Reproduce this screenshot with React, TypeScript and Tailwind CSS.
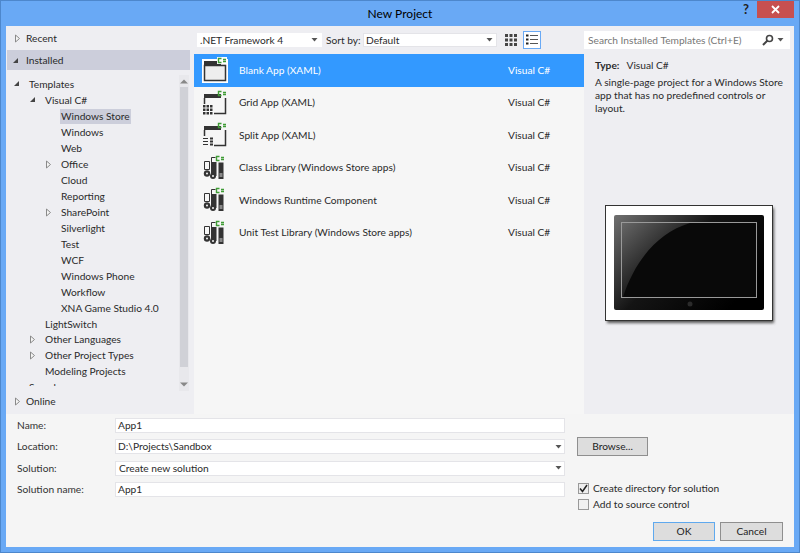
import React from 'react'

const tree = [
    { label: 'Templates', indent: 29, arrow: 'open' },
    { label: 'Visual C#', indent: 45, arrow: 'open' },
    { label: 'Windows Store', indent: 61, selected: true },
    { label: 'Windows', indent: 61 },
    { label: 'Web', indent: 61 },
    { label: 'Office', indent: 61, arrow: 'closed' },
    { label: 'Cloud', indent: 61 },
    { label: 'Reporting', indent: 61 },
    { label: 'SharePoint', indent: 61, arrow: 'closed' },
    { label: 'Silverlight', indent: 61 },
    { label: 'Test', indent: 61 },
    { label: 'WCF', indent: 61 },
    { label: 'Windows Phone', indent: 61 },
    { label: 'Workflow', indent: 61 },
    { label: 'XNA Game Studio 4.0', indent: 61 },
    { label: 'LightSwitch', indent: 45 },
    { label: 'Other Languages', indent: 45, arrow: 'closed' },
    { label: 'Other Project Types', indent: 45, arrow: 'closed' },
    { label: 'Modeling Projects', indent: 45 },
    { label: 'Samples', indent: 29 },
]

const templates = [
    { name: 'Blank App (XAML)', icon: 'blank' },
    { name: 'Grid App (XAML)', icon: 'grid' },
    { name: 'Split App (XAML)', icon: 'split' },
    { name: 'Class Library (Windows Store apps)', icon: 'lib' },
    { name: 'Windows Runtime Component', icon: 'lib' },
    { name: 'Unit Test Library (Windows Store apps)', icon: 'lib' },
]

function Arrow({ open }: { open?: boolean }) {
    return open ? (
        <svg width="7" height="7" viewBox="0 0 7 7" className="shrink-0">
            <path d="M6 1V6H1Z" fill="#444" />
        </svg>
    ) : (
        <svg width="7" height="9" viewBox="0 0 7 9" className="shrink-0">
            <path d="M1.500 1V8L5.500 4.500Z" fill="#f4f4f4" stroke="#8a8a8a" />
        </svg>
    )
}

function Caret() {
    return (
        <svg width="7" height="4" viewBox="0 0 7 4" className="shrink-0">
            <path d="M0.500 0H6.500L3.500 3.500Z" fill="#555" />
        </svg>
    )
}

// small green "C#" mark in the top right of each template icon
function CSharp({ x = 14, backed }: { x?: number; backed?: boolean }) {
    return (
        <g>
            {backed && <rect x={x + 1} y="0" width="10" height="7" fill="#fff" />}
            <g fill="none" stroke="#3f9c35" strokeWidth="1.400">
                <path d={`M${x + 5.500} 1.500H${x + 2.500}V5.500H${x + 5.500}`} />
                <path d={`M${x + 7} 2.500H${x + 10}M${x + 7} 4.500H${x + 10}`} strokeWidth="1.500" />
            </g>
        </g>
    )
}

function TemplateIcon({ kind, selected }: { kind: string; selected?: boolean }) {
    if (kind === 'lib') {
        return (
            <svg width="26" height="26" viewBox="0 0 26 26">
                <path d="M9.500 7V2.500H13.500" fill="none" stroke="#333" />
                <path d="M2.500 6.500H7.500V14.500H2.500Z" fill="#f6f6f6" stroke="#333" />
                <path d="M9 7H14.500V21H9Z" fill="#333" />
                <path d="M16.500 7.500H21.500V24H16.500Z" fill="#333" />
                <path d="M17.500 19H20.500M17.500 21H20.500" stroke="#ddd" />
                <circle cx="5" cy="18.500" r="3.200" fill="#333" />
                <circle cx="5" cy="18.500" r="1" fill="#f6f6f6" />
                <circle cx="11" cy="21" r="3" fill="#333" />
                <circle cx="11" cy="21" r="1" fill="#f6f6f6" />
                <CSharp x={12} />
            </svg>
        )
    }
    return (
        <svg width="26" height="26" viewBox="0 0 26 26">
            {selected && <rect x="1" y="3" width="24" height="22" fill="#eee" stroke="#fff" strokeWidth="2" />}
            <path d="M2 4H19V8H2Z" fill="#333" />
            {kind === 'blank' ? (
                <path d="M2.500 8.500H23.500V23.500H2.500Z" fill="none" stroke="#333" strokeWidth="1.500" />
            ) : (
                <path d="M2.500 8V14M23.500 8V23.500H12" fill="none" stroke="#333" strokeWidth="1.500" />
            )}
            {kind === 'grid' && (
                <g fill="#333">
                    {[0, 1, 2].map((r) =>
                        [0, 1, 2].map((c) => <rect key={`${r}${c}`} x={1 + c * 3.500} y={15 + r * 3.500} width="2.500" height="2.500" />),
                    )}
                </g>
            )}
            {kind === 'split' && (
                <g stroke="#333" strokeWidth="1.200">
                    <path d="M1 16.500H6M1 19.500H6M1 22.500H6" />
                    <path d="M8 16.500H11M8 19.500H11M8 22.500H11" strokeWidth="1.800" />
                </g>
            )}
            <CSharp x={14} backed={selected} />
        </svg>
    )
}

function TabletPreview() {
    return (
        <svg width="176" height="124" viewBox="0 0 176 124">
            <defs>
                <linearGradient id="body" x1="0" y1="0" x2="1" y2="0.600">
                    <stop offset="0" stopColor="#707070" />
                    <stop offset="0.500" stopColor="#141414" />
                    <stop offset="1" stopColor="#000" />
                </linearGradient>
                <linearGradient id="shine" gradientUnits="userSpaceOnUse" x1="17" y1="18" x2="58" y2="62">
                    <stop offset="0" stopColor="#666" />
                    <stop offset="1" stopColor="#161616" />
                </linearGradient>
                <filter id="blur">
                    <feGaussianBlur stdDeviation="1.500" />
                </filter>
            </defs>
            <rect x="2" y="3" width="167" height="115" fill="#555" filter="url(#blur)" />
            <rect x="0.500" y="0.500" width="167" height="115" fill="#fff" stroke="#333" />
            <rect x="9" y="10" width="150" height="95" rx="2" fill="url(#body)" />
            <rect x="16.500" y="17.500" width="135" height="75" fill="#090909" stroke="#999" />
            <path d="M17 18H85C52 28 30 56 18 92H17Z" fill="url(#shine)" />
            <circle cx="85" cy="99" r="2.500" fill="#2b2b2b" />
        </svg>
    )
}

function Field({ label, value, combo }: { label: string; value: string; combo?: boolean }) {
    return (
        <div className="flex items-center h-[21.300px]">
            <span className="w-[98px] text-[#333]">{label}</span>
            <div className="w-[450px] h-[15px] bg-white border border-[#e4e4e8] flex items-center justify-between pl-[2px] pr-[2px] text-[#2a2a2a]">
                <span className={combo && label === 'Solution:' ? 'pl-[1px]' : ''}>{value}</span>
                {combo && <Caret />}
            </div>
        </div>
    )
}

function Button({ label, focus, width }: { label: string; focus?: boolean; width: string }) {
    return (
        <button className={`${width} h-[19px] bg-[#dddddd] border text-center text-[#222] ${focus ? 'border-[#5fa9ee]' : 'border-[#8f8f8f]'}`}>
            {label}
        </button>
    )
}

export default function App() {
    return (
        <div className="w-[800px] h-[553px] overflow-hidden bg-[#69a9f5] border border-[#4d87cc] flex flex-col font-['Lato','Open_Sans',sans-serif] text-[10.200px] leading-[15px] text-[#2a2a2a]">
            <div className="h-[25px] shrink-0 relative flex items-center justify-center text-[12px] text-black">
                New Project
                <span className="absolute right-[50px] top-[1px] font-bold text-[13px] text-[#222]">?</span>
                <div className="absolute right-[5px] top-0 w-[37px] h-[17px] bg-[#c75050] flex items-center justify-center">
                    <svg width="9" height="9" viewBox="0 0 9 9">
                        <path d="M1 1L8 8M8 1L1 8" stroke="#fff" strokeWidth="1.800" />
                    </svg>
                </div>
            </div>

            <div className="mx-[5px] mb-[5px] flex-1 flex flex-col min-h-0 bg-[#f5f5f5]">
                <div className="h-[388px] shrink-0 flex bg-[#eeeef2]">
                    {/* left tree */}
                    <div className="w-[183px] ml-[1px] flex flex-col relative">
                        <div className="h-[24px] flex items-center pl-[7px] gap-[5px] shrink-0">
                            <Arrow />
                            <span>Recent</span>
                        </div>
                        <div className="h-[20px] flex items-center pl-[5px] gap-[7px] bg-[#cccedb] shrink-0">
                            <Arrow open />
                            <span>Installed</span>
                        </div>
                        <div className="h-[310px] mt-[6px] shrink-0 overflow-hidden relative flex flex-col pt-[1px]">
                            {tree.map((t) => (
                                <div key={t.label} className="h-[15.950px] shrink-0 flex items-center relative">
                                    {t.arrow && (
                                        <span className={`absolute top-[3px] ${t.indent === 29 ? 'left-[6px]' : t.indent === 45 ? 'left-[22px]' : 'left-[38px]'}`}>
                                            <Arrow open={t.arrow === 'open'} />
                                        </span>
                                    )}
                                    <span className={t.indent === 29 ? 'ml-[22px]' : t.indent === 45 ? 'ml-[38px]' : 'ml-[53px] px-[1px]'}>
                                        <span className={t.selected ? 'bg-[#cccedb] px-[1px] -mx-[1px] inline-block' : ''}>{t.label}</span>
                                    </span>
                                </div>
                            ))}
                        </div>
                        <div className="flex-1 flex items-center pl-[7px] gap-[5px] pt-[2px]">
                            <Arrow />
                            <span>Online</span>
                        </div>
                        {/* scrollbar */}
                        <div className="absolute right-[1px] top-[49px] w-[10px] h-[316px] flex flex-col items-center bg-[#e8e8ec]">
                            <svg width="8" height="5" viewBox="0 0 8 5" className="mt-[4px]">
                                <path d="M0 4.500L4 0.500L8 4.500Z" fill="#888" />
                            </svg>
                            <div className="w-[8px] h-[280px] mt-[3px] bg-[#d0d1d7]" />
                            <div className="flex-1" />
                            <svg width="8" height="5" viewBox="0 0 8 5" className="mb-[4px]">
                                <path d="M0 0.500L4 4.500L8 0.500Z" fill="#888" />
                            </svg>
                        </div>
                    </div>

                    {/* center */}
                    <div className="w-[390px] ml-[4px] flex flex-col shrink-0">
                        <div className="h-[28px] shrink-0 flex items-center pl-[3px]">
                            <div className="w-[125px] h-[14px] bg-white flex items-center justify-between pl-[3px] pr-[4px]">
                                .NET Framework 4
                                <Caret />
                            </div>
                            <span className="ml-[4px] w-[37px] whitespace-nowrap">Sort by:</span>
                            <div className="w-[134px] h-[14px] bg-white border border-[#e4e4e8] flex items-center justify-between pl-[2px] pr-[3px]">
                                Default
                                <Caret />
                            </div>
                            <svg width="13" height="13" viewBox="0 0 13 13" className="ml-[8px]">
                                <g fill="#444">
                                    {[0, 1, 2].map((r) =>
                                        [0, 1, 2].map((c) => <rect key={`${r}${c}`} x={c * 4.500} y={r * 4.500} width="3" height="3" />),
                                    )}
                                </g>
                            </svg>
                            <div className="ml-[5px] w-[18px] h-[18px] bg-white border border-[#69a9f5] flex items-center justify-center">
                                <svg width="12" height="12" viewBox="0 0 12 12">
                                    <path d="M0 1.500H2.500M0 5.500H2.500M0 9.500H2.500" stroke="#222" strokeWidth="2" />
                                    <path d="M4 1.500H12M4 5.500H12M4 9.500H12" stroke="#555" />
                                </svg>
                            </div>
                        </div>
                        <div className="flex-1 bg-[#f6f6f6] flex flex-col">
                            {templates.map((t, i) => (
                                <div
                                    key={t.name}
                                    className={`h-[32.500px] shrink-0 flex items-center ${i === 0 ? 'bg-[#3399ff] text-white' : ''}`}
                                >
                                    <span className="ml-[8px] w-[37px] shrink-0 flex">
                                        <TemplateIcon kind={t.icon} selected={i === 0} />
                                    </span>
                                    <span className="w-[269px] shrink-0">{t.name}</span>
                                    <span>Visual C#</span>
                                </div>
                            ))}
                        </div>
                    </div>

                    {/* right */}
                    <div className="flex-1 flex flex-col">
                        <div className="h-[18px] mt-[5px] mr-[4px] bg-white flex items-center justify-between pl-[4px] pr-[6px] text-[#777] whitespace-nowrap">
                            Search Installed Templates (Ctrl+E)
                            <span className="flex items-center gap-[3px]">
                                <svg width="12" height="12" viewBox="0 0 12 12">
                                    <circle cx="7.500" cy="4.500" r="3" fill="none" stroke="#444" strokeWidth="1.600" />
                                    <path d="M5.500 6.500L1 11" stroke="#444" strokeWidth="2" />
                                </svg>
                                <Caret />
                            </span>
                        </div>
                        <div className="pl-[11px] pr-[6px] mt-[9px]">
                            <div>
                                <b className="font-bold">Type:</b>
                                <span className="ml-[7px]">Visual C#</span>
                            </div>
                            <p className="mt-[3px] leading-[13px]">
                                A single-page project for a Windows Store app that has no predefined controls or layout.
                            </p>
                        </div>
                        <div className="ml-[21px] mt-[90px]">
                            <TabletPreview />
                        </div>
                    </div>
                </div>

                {/* bottom */}
                <div className="flex-1 flex pl-[11px]">
                    <div className="flex flex-col pt-[1px]">
                        <Field label="Name:" value="App1" />
                        <Field label="Location:" value="D:\Projects\Sandbox" combo />
                        <Field label="Solution:" value="Create new solution" combo />
                        <Field label="Solution name:" value="App1" />
                    </div>
                    <div className="ml-[12px] flex-1 flex flex-col">
                        <div className="mt-[23px]">
                            <Button label="Browse..." width="w-[71px]" />
                        </div>
                        <div className="mt-[24px] flex items-center gap-[4px] h-[16.500px]">
                            <span className="w-[11px] h-[11px] ml-[1px] bg-[#eee] border border-[#999] flex items-center justify-center">
                                <svg width="9" height="9" viewBox="0 0 9 9">
                                    <path d="M1 4.500L3.500 7.500L8 1" fill="none" stroke="#222" strokeWidth="1.500" />
                                </svg>
                            </span>
                            <span>Create directory for solution</span>
                        </div>
                        <div className="flex items-center gap-[4px] h-[16.500px]">
                            <span className="w-[11px] h-[11px] ml-[1px] bg-[#f0f0f0] border border-[#999]" />
                            <span>Add to source control</span>
                        </div>
                        <div className="mt-[9px] flex justify-end gap-[5px] pr-[11px]">
                            <Button label="OK" focus width="w-[62px]" />
                            <Button label="Cancel" width="w-[63px]" />
                        </div>
                    </div>
                </div>
            </div>
        </div>
    )
}
